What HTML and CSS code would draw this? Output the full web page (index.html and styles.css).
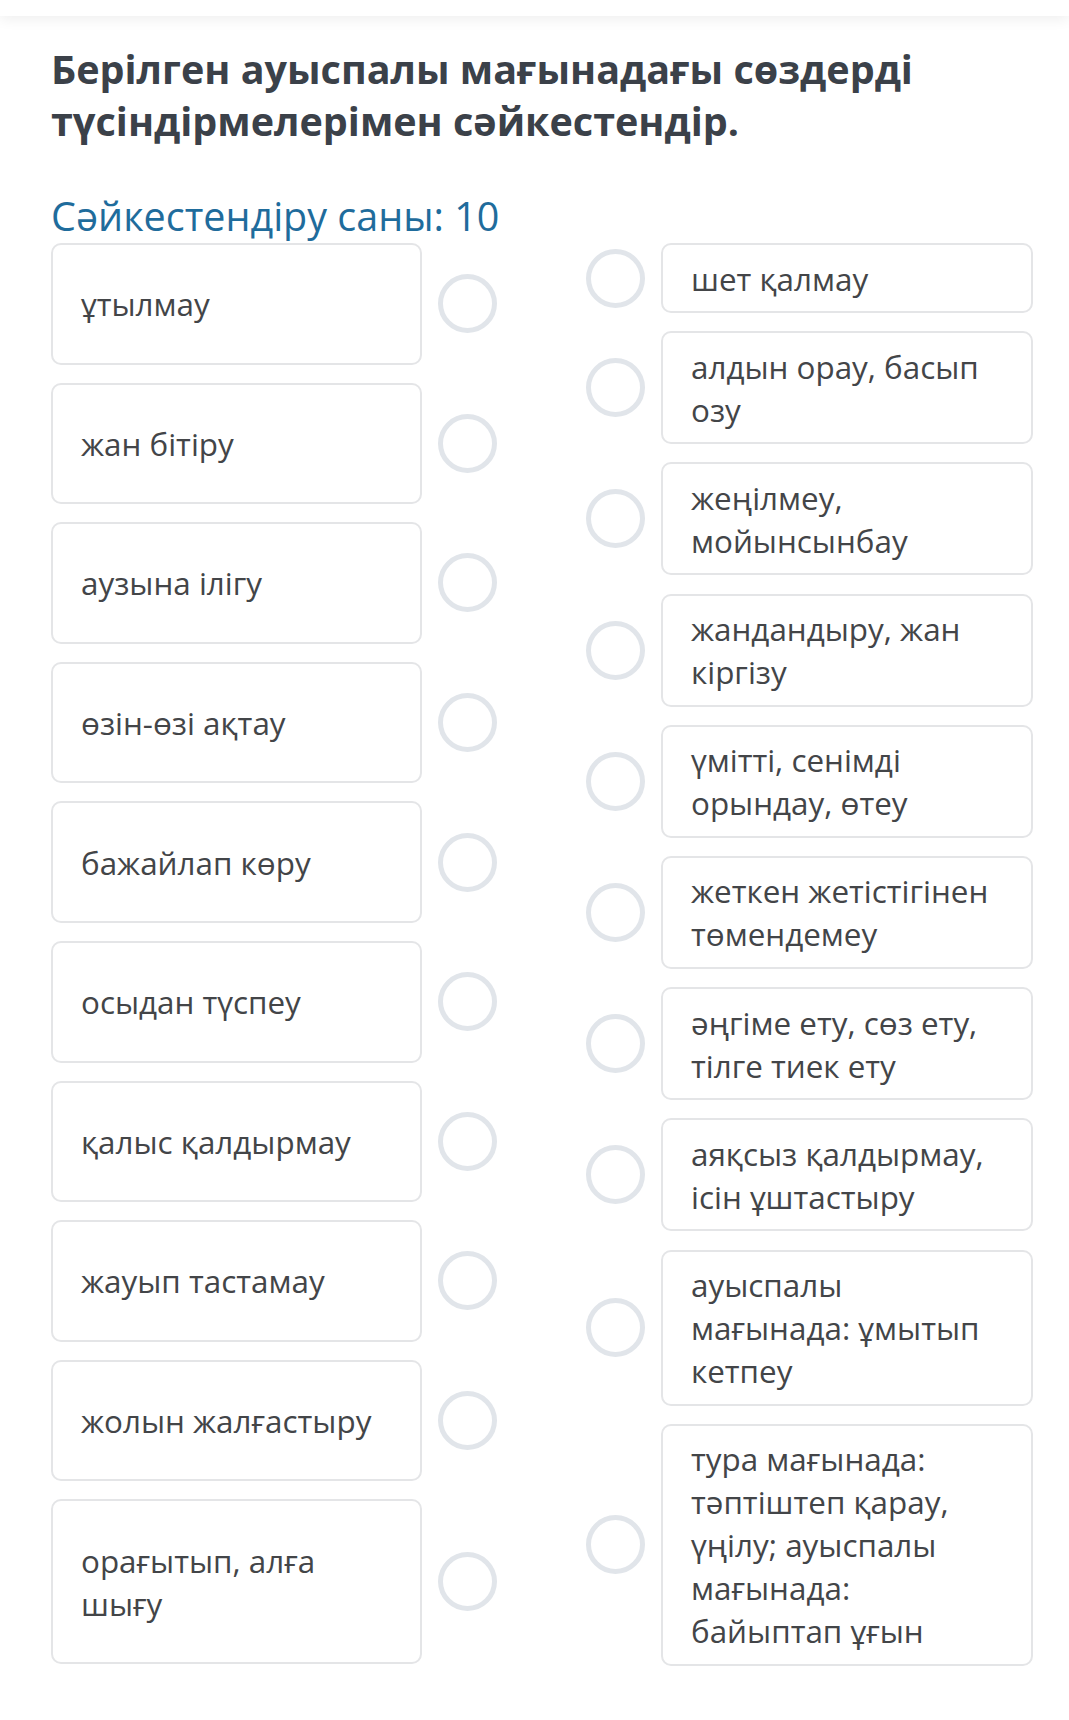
FILE: index.html
```html
<!DOCTYPE html>
<html lang="kk">
<head>
<meta charset="utf-8">
<title>Сәйкестендіру</title>
<link rel="stylesheet" href="styles.css">
</head>
<body>
<header class="topbar"></header>
<main class="page">
  <h1 class="title">Берілген ауыспалы мағынадағы сөздерді түсіндірмелерімен сәйкестендір.</h1>
  <h2 class="count">Сәйкестендіру саны: 10</h2>
  <div class="board">
    <div class="col col-left">
      <div class="row"><div class="card card-left">ұтылмау</div><span class="dot"></span></div>
      <div class="row"><div class="card card-left">жан бітіру</div><span class="dot"></span></div>
      <div class="row"><div class="card card-left">аузына ілігу</div><span class="dot"></span></div>
      <div class="row"><div class="card card-left">өзін-өзі ақтау</div><span class="dot"></span></div>
      <div class="row"><div class="card card-left">бажайлап көру</div><span class="dot"></span></div>
      <div class="row"><div class="card card-left">осыдан түспеу</div><span class="dot"></span></div>
      <div class="row"><div class="card card-left">қалыс қалдырмау</div><span class="dot"></span></div>
      <div class="row"><div class="card card-left">жауып тастамау</div><span class="dot"></span></div>
      <div class="row"><div class="card card-left">жолын жалғастыру</div><span class="dot"></span></div>
      <div class="row"><div class="card card-left">орағытып, алға шығу</div><span class="dot"></span></div>
    </div>
    <div class="col col-right">
      <div class="row"><span class="dot"></span><div class="card card-right">шет қалмау</div></div>
      <div class="row"><span class="dot"></span><div class="card card-right">алдын орау, басып озу</div></div>
      <div class="row"><span class="dot"></span><div class="card card-right">жеңілмеу, мойынсынбау</div></div>
      <div class="row"><span class="dot"></span><div class="card card-right">жандандыру, жан кіргізу</div></div>
      <div class="row"><span class="dot"></span><div class="card card-right">үмітті, сенімді орындау, өтеу</div></div>
      <div class="row"><span class="dot"></span><div class="card card-right">жеткен жетістігінен төмендемеу</div></div>
      <div class="row"><span class="dot"></span><div class="card card-right">әңгіме ету, сөз ету, тілге тиек ету</div></div>
      <div class="row"><span class="dot"></span><div class="card card-right">аяқсыз қалдырмау, ісін ұштастыру</div></div>
      <div class="row"><span class="dot"></span><div class="card card-right">ауыспалы мағынада: ұмытып кетпеу</div></div>
      <div class="row"><span class="dot"></span><div class="card card-right">тура мағынада: тәптіштеп қарау, үңілу; ауыспалы мағынада: байыптап ұғын</div></div>
    </div>
  </div>
</main>
</body>
</html>
```
FILE: styles.css
```css
html, body {
  margin: 0;
  padding: 0;
  background: #ffffff;
  font-family: "Open Sans", "Noto Sans", "DejaVu Sans", sans-serif;
}

.topbar {
  height: 16px;
  background: #ffffff;
  box-shadow: 0 3px 14px rgba(0, 0, 0, 0.07);
}

.page {
  padding: 27px 30px 40px 51px;
}

.title {
  margin: 0;
  font-size: 39.5px;
  line-height: 52px;
  font-weight: 700;
  color: #3b4149;
}

.count {
  margin: 45px 0 3px 0;
  font-size: 39.5px;
  line-height: 48px;
  font-weight: 400;
  color: #1f6c9c;
}

.board {
  display: flex;
  gap: 89px;
  align-items: flex-start;
}

.col {
  display: flex;
  flex-direction: column;
  gap: 18px;
}

.col-right {
  gap: 18.2px;
}

.row {
  display: flex;
  align-items: center;
  gap: 16px;
}

.card {
  box-sizing: border-box;
  width: 371px;
  border: 2px solid #e4e5e7;
  border-radius: 10px;
  background: #ffffff;
  font-size: 31.4px;
  line-height: 43px;
  color: #434548;
}

.card-left {
  padding: 37.3px 28px;
}

.card-right {
  width: 372px;
  padding: 11.5px 28px;
}

.dot {
  flex: none;
  box-sizing: border-box;
  width: 59px;
  height: 59px;
  border: 5px solid #e1e5ea;
  border-radius: 50%;
  background: #ffffff;
}
```
